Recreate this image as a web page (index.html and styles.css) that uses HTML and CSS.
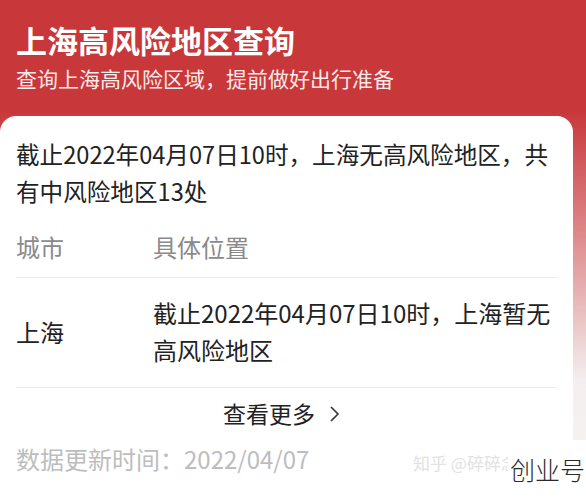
FILE: index.html
```html
<!DOCTYPE html>
<html lang="zh-CN">
<head>
    <meta charset="UTF-8">
    <title>上海高风险地区查询</title>
    <link rel="stylesheet" href="styles.css">
</head>
<body>
<div class="hero">
    <h1 class="title">上海高风险地区查询</h1>
    <p class="subtitle">查询上海高风险区域，提前做好出行准备</p>
    <div class="card">
        <p class="summary">截止2022年04月07日10时，上海无高风险地区，共有中风险地区13处</p>
        <div class="table">
            <div class="row head">
                <span class="city">城市</span>
                <span class="place">具体位置</span>
            </div>
            <div class="row">
                <span class="city">上海</span>
                <span class="place">截止2022年04月07日10时，上海暂无高风险地区</span>
            </div>
        </div>
        <div class="more">
            <span>查看更多</span>
            <svg width="12" height="18" viewBox="0 0 12 18">
                <path d="M3 2 L10 9 L3 16" fill="none" stroke="#333" stroke-width="1.6"/>
            </svg>
        </div>
    </div>
</div>
<div class="footer">
    <span class="updated">数据更新时间：2022/04/07</span>
    <span class="mark">知乎 @碎碎念</span>
    <span class="brand">创业号</span>
</div>
</body>
</html>
```

FILE: styles.css
```css
body {
    margin: 0;
    font-family: "Noto Sans CJK SC", "Noto Sans", sans-serif;
    background-color: white;
    width: 586px;
    height: 500px;
    overflow: hidden;
}

.hero {
    padding-top: 20px;
    background: linear-gradient(#c8373a 0, #c8373a 110px, #df8d8f 240px, #f4eeee 380px, #f6f2f2 100%);
}

.title {
    margin: 0 0 0 16px;
    font-size: 31px;
    line-height: 40px;
    font-weight: bold;
    color: white;
}

.subtitle {
    margin: 3px 0 0 16px;
    font-size: 21px;
    line-height: 30px;
    color: #fbeaea;
}

.card {
    margin: 23px 13px 0 0;
    padding: 20px 16px 8px 16px;
    background-color: white;
    border-radius: 16px 16px 0 0;
}

.summary {
    margin: 0;
    font-size: 23.6px;
    line-height: 37px;
    color: #222;
}

.table {
    margin-top: 7px;
}

.row {
    display: flex;
    align-items: center;
    border-bottom: 1px solid #ececec;
    padding: 16px 0 19px 0;
    font-size: 24px;
    line-height: 37px;
    color: #222;
}

.row.head {
    padding: 11px 0 12px 0;
    color: #8a8a8a;
}

.city {
    width: 137px;
    flex-shrink: 0;
}

.place {
    flex: 1;
}

.more {
    display: flex;
    justify-content: center;
    align-items: center;
    gap: 13px;
    padding: 7px 10px 0 0;
    font-size: 23px;
    line-height: 37px;
    color: #222;
}

.footer {
    position: relative;
    height: 60px;
    padding-left: 16px;
}

.updated {
    display: block;
    padding-top: 2px;
    font-size: 24px;
    line-height: 34px;
    color: #bdbdbd;
}

.mark {
    position: absolute;
    left: 413px;
    top: 10px;
    font-size: 17px;
    color: #e2e2e2;
    white-space: nowrap;
}

.brand {
    position: absolute;
    left: 508px;
    top: 12px;
    font-size: 25px;
    font-weight: 300;
    line-height: 34px;
    color: #2a2a2a;
    background-color: white;
    padding-left: 2px;
    white-space: nowrap;
}
```
